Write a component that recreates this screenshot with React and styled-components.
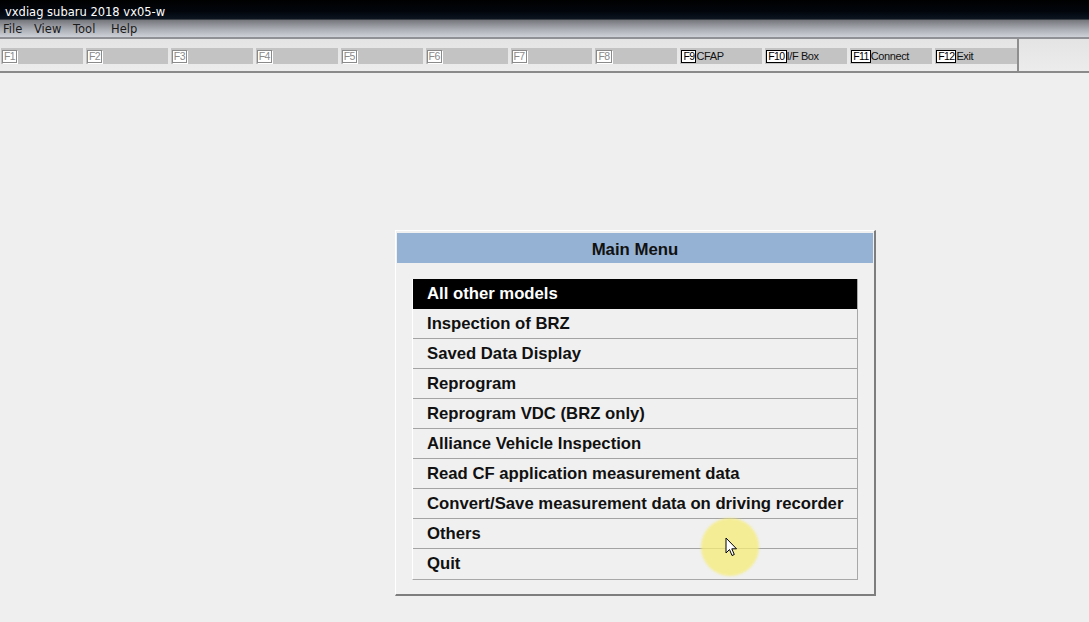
import React from "react";
import styled, { createGlobalStyle } from "styled-components";

const Global = createGlobalStyle`
  html, body {
    margin: 0;
    padding: 0;
    background: #efefef;
    font-family: "Liberation Sans", Arial, sans-serif;
  }
`;

const Window = styled.div`
  width: 1089px;
  height: 622px;
  overflow: hidden;
  position: relative;
  background: #efefef;
  display: flex;
  flex-direction: column;
`;

const TitleBar = styled.div`
  height: 20px;
  background: linear-gradient(to bottom, #000 0%, #02060c 60%, #0b1420 100%);
  color: #fff;
  font-family: "DejaVu Sans", sans-serif;
  font-size: 11.5px;
  padding-left: 5px;
  line-height: 25px;
  box-sizing: border-box;
  border-bottom: 1px solid #3a3f45;
`;

const MenuBar = styled.div`
  height: 17px;
  background: linear-gradient(to bottom, #74767c 0%, #abadb4 55%, #cfd1d8 100%);
  display: flex;
  align-items: center;
  font-family: "DejaVu Sans", sans-serif;
  font-size: 11.5px;
  color: #1a1a1a;
  border-bottom: 2px solid #8f9096;
`;

const MenuItem = styled.span`
  width: ${(p) => p.w}px;
  padding-left: 3px;
  box-sizing: border-box;
  margin-top: 1px;
`;

const Toolbar = styled.div`
  height: 34px;
  display: flex;
  align-items: flex-start;
  border-bottom: 2px solid #8a8a8a;
  box-sizing: border-box;
  background: linear-gradient(to bottom, #e4e4e4 0%, #ececec 100%);
`;

const Keys = styled.div`
  display: flex;
  gap: 3px;
  padding: 9px 0 0 1px;
  width: 1019px;
  box-sizing: border-box;
  height: 100%;
  border-right: 2px solid #8e8e8e;
`;

const KeyButton = styled.div`
  width: 82px;
  height: 16px;
  background: #c3c3c3;
  display: flex;
  align-items: center;
  font-size: 11px;
  color: #111;
  letter-spacing: -0.4px;
`;

const KeyCap = styled.span`
  height: 13px;
  padding: 0 1px;
  min-width: 12px;
  margin-left: 1px;
  box-sizing: border-box;
  display: inline-flex;
  align-items: center;
  justify-content: center;
  font-size: 10.5px;
  letter-spacing: -0.6px;
  background: #fff;
  border: 1px solid ${(p) => (p.off ? "#8a8a8a" : "#000")};
  color: ${(p) => (p.off ? "#8a8a8a" : "#000")};
  box-shadow: ${(p) => (p.off ? "inset 1px 1px 0 #fff, 1px 1px 0 #fff" : "none")};
`;

const Desk = styled.div`
  flex: 1;
  display: flex;
  justify-content: flex-start;
  padding: 157px 0 0 395px;
`;

const Panel = styled.div`
  width: 481px;
  height: 366px;
  box-sizing: border-box;
  background: #f0f0f0;
  border-top: 1px solid #fff;
  border-left: 1px solid #fff;
  border-right: 2px solid #7e7e7e;
  border-bottom: 2px solid #7e7e7e;
  padding: 2px 1px 0 1px;
  display: flex;
  flex-direction: column;
`;

const Header = styled.div`
  height: 30px;
  box-sizing: border-box;
  padding-top: 3px;
  background: #95b1d4;
  display: flex;
  align-items: center;
  justify-content: center;
  font-weight: bold;
  font-size: 16.8px;
  color: #111;
`;

const List = styled.div`
  margin: 16px 0 0 15px;
  width: 446px;
  border-right: 1px solid #a8a8a8;
  border-bottom: 1px solid #a8a8a8;
  border-left: 1px solid #fff;
  box-sizing: border-box;
`;

const Row = styled.div`
  height: 30px;
  box-sizing: border-box;
  display: flex;
  align-items: center;
  padding-left: 14px;
  font-weight: bold;
  font-size: 16.7px;
  background: ${(p) => (p.active ? "#000" : "#f0f0f0")};
  color: ${(p) => (p.active ? "#fff" : "#111")};
  border-bottom: 1px solid ${(p) => (p.active ? "#000" : "#a3a3a3")};
  &:last-child {
    border-bottom: none;
  }
`;

const Spot = styled.div`
  position: absolute;
  left: 701px;
  top: 518px;
  width: 58px;
  height: 58px;
  border-radius: 50%;
  background: rgba(246, 236, 120, 0.75);
  filter: blur(1px);
`;

const Cursor = styled.svg`
  position: absolute;
  left: 725px;
  top: 537px;
`;

const keys = [
  ["F1"], ["F2"], ["F3"], ["F4"], ["F5"], ["F6"], ["F7"], ["F8"],
  ["F9", "CFAP"], ["F10", "I/F Box"], ["F11", "Connect"], ["F12", "Exit"],
];

const items = [
  "All other models",
  "Inspection of BRZ",
  "Saved Data Display",
  "Reprogram",
  "Reprogram VDC (BRZ only)",
  "Alliance Vehicle Inspection",
  "Read CF application measurement data",
  "Convert/Save measurement data on driving recorder",
  "Others",
  "Quit",
];

export default function App() {
  return (
    <Window>
      <Global />
      <TitleBar>vxdiag subaru 2018 vx05-w</TitleBar>
      <MenuBar>
        <MenuItem w={31}>File</MenuItem>
        <MenuItem w={39}>View</MenuItem>
        <MenuItem w={38}>Tool</MenuItem>
        <MenuItem w={40}>Help</MenuItem>
      </MenuBar>
      <Toolbar>
        <Keys>
          {keys.map(([k, label]) => (
            <KeyButton key={k}>
              <KeyCap off={!label}>{k}</KeyCap>
              {label}
            </KeyButton>
          ))}
        </Keys>
      </Toolbar>
      <Desk>
        <Panel>
          <Header>Main Menu</Header>
          <List>
            {items.map((t, i) => (
              <Row key={t} active={i === 0}>
                {t}
              </Row>
            ))}
          </List>
        </Panel>
      </Desk>
      <Spot />
      <Cursor width="13" height="20" viewBox="0 0 13 20">
        <path
          d="M1 1 L1 16 L4.5 12.5 L7 18.5 L9.3 17.5 L6.8 11.8 L11.5 11.8 Z"
          fill="#fff"
          stroke="#000"
          strokeWidth="1"
          strokeLinejoin="round"
        />
      </Cursor>
    </Window>
  );
}
